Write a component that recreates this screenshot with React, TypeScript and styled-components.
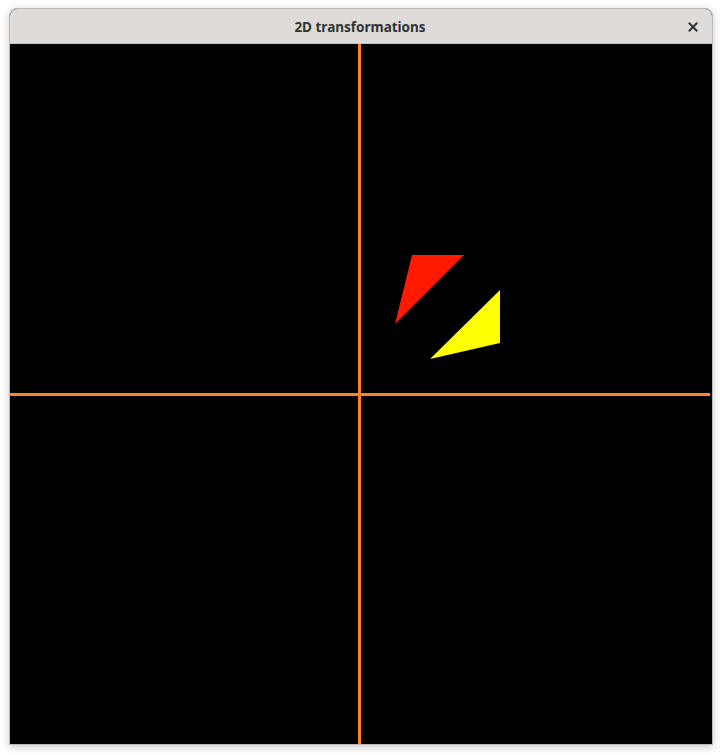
import React from 'react';
import styled, { createGlobalStyle } from 'styled-components';

const GlobalStyle = createGlobalStyle`
  html, body {
    margin: 0;
    padding: 0;
    background: #ffffff;
  }
`;

const Page = styled.div`
  width: 720px;
  height: 755px;
  padding: 8px 0 0 9px;
  box-sizing: border-box;
`;

const Window = styled.div`
  width: 702px;
  border: 1px solid #bdb9b5;
  border-radius: 8px 8px 0 0;
  box-shadow: 0 2px 8px rgba(0, 0, 0, 0.22);
  overflow: hidden;
  background: #000;
`;

const TitleBar = styled.div`
  height: 35px;
  background: #dedbd8;
  border-bottom: 1px solid #c7c3bf;
  box-sizing: border-box;
  display: flex;
  align-items: center;
  justify-content: center;
  position: relative;
`;

const Title = styled.div`
  font-family: 'Noto Sans', 'DejaVu Sans', sans-serif;
  font-weight: 700;
  font-size: 13.5px;
  color: #2e3436;
  margin-left: -2px;
  margin-top: 1px;
`;

const CloseButton = styled.button`
  position: absolute;
  right: 10px;
  top: 9px;
  width: 18px;
  height: 18px;
  padding: 0;
  border: none;
  background: none;
  display: flex;
  align-items: center;
  justify-content: center;
  cursor: pointer;
`;

const Canvas = styled.svg`
  display: block;
  width: 700px;
  height: 700px;
  background: #000;
`;

const AXIS = '#ff7f2a';

export default () => {
  return (
    <Page>
      <GlobalStyle />
      <Window>
        <TitleBar>
          <Title>2D transformations</Title>
          <CloseButton aria-label="Close">
            <svg width="10" height="10" viewBox="0 0 10 10">
              <path d="M1.5 1.5 L8.5 8.5 M8.5 1.5 L1.5 8.5" stroke="#2e3436" strokeWidth="2" strokeLinecap="square" />
            </svg>
          </CloseButton>
        </TitleBar>
        <Canvas viewBox="0 0 700 700">
          <rect x="348" y="0" width="3" height="700" fill={AXIS} />
          <rect x="0" y="349" width="700" height="3" fill={AXIS} />
          <polygon points="402,211 454,211 385,280" fill="#ff1a00" />
          <polygon points="490,246 490,299 420,315" fill="#ffff00" />
        </Canvas>
      </Window>
    </Page>
  );
};
